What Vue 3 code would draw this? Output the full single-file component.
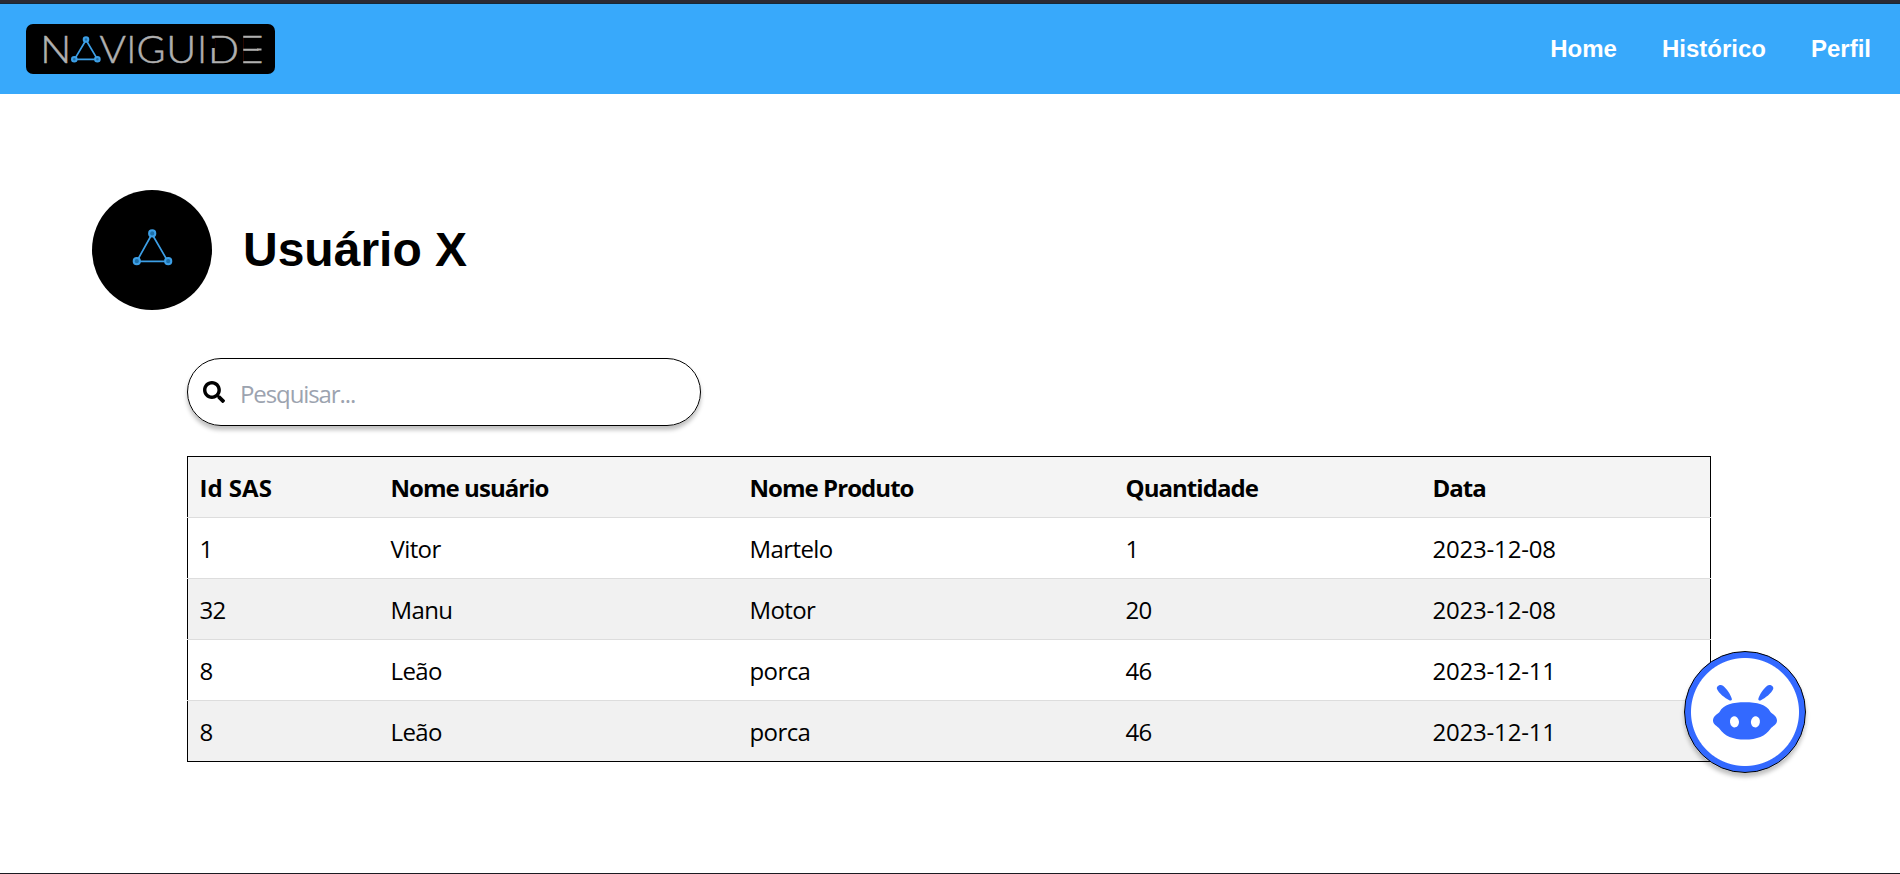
<script setup>
const links = ['Home', 'Histórico', 'Perfil']
const columns = [
  { label: 'Id SAS', cls: 'c-id' },
  { label: 'Nome usuário', cls: 'c-user' },
  { label: 'Nome Produto', cls: 'c-product' },
  { label: 'Quantidade', cls: 'c-qty' },
  { label: 'Data', cls: 'c-date' }
]
const rows = [
  ['1', 'Vitor', 'Martelo', '1', '2023-12-08'],
  ['32', 'Manu', 'Motor', '20', '2023-12-08'],
  ['8', 'Leão', 'porca', '46', '2023-12-11'],
  ['8', 'Leão', 'porca', '46', '2023-12-11']
]
</script>

<template>
  <div class="page">
    <header class="topbar">
      <svg class="logo" width="249" height="50" viewBox="0 0 249 50">
        <g class="logo-text">
          <text x="14.3" y="38.9" textLength="31" lengthAdjust="spacingAndGlyphs">N</text>
          <text x="73.600" y="38.9" textLength="26.500" lengthAdjust="spacingAndGlyphs">V</text>
          <text x="100.500" y="38.9">I</text>
          <text x="110.500" y="38.9" textLength="29" lengthAdjust="spacingAndGlyphs">G</text>
          <text x="140.200" y="38.9" textLength="30" lengthAdjust="spacingAndGlyphs">U</text>
          <text x="171.300" y="38.9">I</text>
          <text x="182" y="38.9" textLength="31" lengthAdjust="spacingAndGlyphs">D</text>
          <text x="208.700" y="38.9" textLength="29" lengthAdjust="spacingAndGlyphs">E</text>
        </g>
        <rect x="184" y="14.500" width="5" height="9.500" />
        <rect x="213" y="11" width="4.200" height="29" />
        <rect class="bar" x="231" y="24.500" width="4.500" height="2" />
        <g class="mark">
          <path d="M60 16 48.500 35.300H71.500Z" />
          <circle cx="60" cy="15.500" r="2.300" />
          <circle cx="48.300" cy="35.200" r="2.300" />
          <circle cx="71.400" cy="35.200" r="2.300" />
        </g>
      </svg>
      <nav class="nav">
        <a v-for="l in links" :key="l">{{ l }}</a>
      </nav>
    </header>

    <section class="profile">
      <svg class="avatar" width="120" height="120" viewBox="0 0 120 120">
        <circle cx="60" cy="60" r="60" />
        <g class="mark">
          <path d="M60 44 44.800 71.300H75.800Z" />
          <circle cx="60.200" cy="43.400" r="3.100" />
          <circle cx="44.800" cy="71.200" r="3.100" />
          <circle cx="76.200" cy="71.200" r="3.100" />
        </g>
      </svg>
      <h1>Usuário X</h1>
    </section>

    <main class="content">
      <div class="search">
        <svg width="22" height="22" viewBox="0 0 512 512">
          <path d="M505 442.700 405.300 343c-4.500-4.500-10.600-7-17-7H372c27.600-35.300 44-79.700 44-128C416 93.100 322.900 0 208 0S0 93.100 0 208s93.100 208 208 208c48.300 0 92.700-16.400 128-44v16.300c0 6.400 2.500 12.500 7 17l99.700 99.700c9.400 9.400 24.600 9.400 33.900 0l28.300-28.300c9.400-9.400 9.400-24.600.1-34zM208 336c-70.700 0-128-57.200-128-128 0-70.700 57.200-128 128-128 70.700 0 128 57.200 128 128 0 70.700-57.200 128-128 128z" />
        </svg>
        <input type="text" placeholder="Pesquisar..." />
      </div>

      <table>
        <colgroup>
          <col v-for="c in columns" :key="c.cls" :class="c.cls" />
        </colgroup>
        <thead>
          <tr>
            <th v-for="c in columns" :key="c.cls" :class="c.cls + '-head'">{{ c.label }}</th>
          </tr>
        </thead>
        <tbody>
          <tr v-for="(r, i) in rows" :key="i">
            <td v-for="(v, j) in r" :key="j" :class="columns[j].cls + '-cell'">{{ v }}</td>
          </tr>
        </tbody>
      </table>
    </main>

    <button class="bot" aria-label="Chat">
      <svg width="108" height="108" viewBox="0 0 108 108">
        <path d="M54 44.200C66 44.200 75.500 46 79.500 54C81 55.900 86 58 86 62.500C86 67 81.500 68 79.500 70.700C74.500 78 66 81.500 54 81.500C42 81.500 33.500 78 28.500 70.700C26.500 68 22 67 22 62.500C22 58 27 55.900 28.500 54C32.500 46 42 44.200 54 44.200Z" />
        <path d="M26 31C25 28 29.500 25.600 32 27.700C35.700 30.500 39.600 36.500 40.900 41C41.200 42.300 39.500 42.900 38.300 42.200C34 40 27.600 35.300 26 31Z" />
        <path d="M82.200 31C83.200 28 78.700 25.600 76.200 27.700C72.500 30.500 68.600 36.500 67.300 41C67 42.300 68.700 42.900 69.900 42.200C74.200 40 80.600 35.300 82.200 31Z" />
        <ellipse class="eye" cx="43.500" cy="63.800" rx="4.500" ry="5.600" transform="rotate(-8 43.500 63.800)" />
        <ellipse class="eye" cx="64.400" cy="63.800" rx="4.500" ry="5.600" transform="rotate(8 64.400 63.800)" />
      </svg>
    </button>
  </div>
</template>

<style>
body {
  margin: 0;
  background: #fff;
}
</style>

<style scoped>
.page {
  position: relative;
  box-sizing: border-box;
  height: 874px;
  overflow: hidden;
  border-top: 3px solid #2b2a33;
  border-bottom: 1px solid #1c1b22;
  background: #fff;
  color: #000;
  font-family: "Open Sans", "Noto Sans", sans-serif;
}
.topbar {
  box-sizing: border-box;
  height: 91px;
  border-top: 1px solid #15293a;
  background: #38a9fb;
  display: flex;
  justify-content: space-between;
  align-items: flex-start;
  padding: 20px 29px 0 26px;
}
.logo {
  display: block;
  background: #000;
  border-radius: 7px;
}
.logo-text {
  font-family: Lato, sans-serif;
  font-size: 37px;
  font-weight: 300;
  fill: #b0b0b0;
  stroke: #b0b0b0;
  stroke-width: 0.5;
}
.bar {
  fill: #b0b0b0;
}
.mark {
  fill: none;
  stroke: #3d9fe6;
  stroke-width: 1.7;
}
.mark circle {
  fill: #1d70aa;
  stroke-width: 2;
}
.nav {
  display: flex;
  gap: 45px;
  padding-top: 11px;
  font: bold 24px/28px "Liberation Sans", Arial, sans-serif;
  color: #fff;
}
.profile {
  display: flex;
  align-items: center;
  gap: 31px;
  margin: 96px 0 0 92px;
}
.avatar {
  display: block;
}
h1 {
  margin: 0;
  font: bold 48px/58px "Liberation Sans", Arial, sans-serif;
}
.content {
  margin: 48px 0 0 187px;
  width: 1524px;
}
.search {
  box-sizing: border-box;
  width: 514px;
  height: 68px;
  border: 1px solid #000;
  border-radius: 34px;
  box-shadow: 0 4px 4px rgba(0, 0, 0, 0.25);
  display: flex;
  align-items: center;
  padding-left: 15px;
  gap: 15px;
}
.search input {
  border: 0;
  outline: 0;
  padding: 3px 0 0;
  width: 400px;
  background: transparent;
  font: 24px/32px "Open Sans", "Noto Sans", sans-serif;
  letter-spacing: -1.1px;
}
.search input::placeholder {
  color: #9ca3af;
  opacity: 1;
}
table {
  width: 1524px;
  margin-top: 30px;
  table-layout: fixed;
  border-collapse: collapse;
  border: 1px solid #000;
  font-size: 24px;
  line-height: 36px;
}
.c-id { width: 191px; }
.c-user { width: 359px; }
.c-product { width: 376px; }
.c-qty { width: 307px; }
th,
td {
  height: 60px;
  padding: 2px 0 0 12px;
  box-sizing: border-box;
  text-align: left;
  letter-spacing: -0.6px;
}
th {
  letter-spacing: -0.95px;
}
th.c-id-head {
  letter-spacing: 0;
}
td.c-date-cell {
  letter-spacing: -0.2px;
}
.c-id-head,
.c-id-cell {
  padding-left: 11.5px;
}
tr {
  height: 61px;
}
thead tr {
  background: #f4f4f4;
}
tbody tr {
  border-top: 1px solid #ddd;
}
tbody tr:nth-child(even) {
  background: #f1f1f1;
}
.bot {
  position: absolute;
  left: 1684px;
  top: 648px;
  box-sizing: border-box;
  width: 122px;
  height: 122px;
  border: 1px solid #000;
  border-radius: 50%;
  padding: 0;
  background: radial-gradient(circle, #fff 53.500px, #3369ff 54.500px);
  box-shadow: 0 4px 4px rgba(0, 0, 0, 0.25);
  display: flex;
  align-items: center;
  justify-content: center;
  fill: #3369ff;
}
.eye {
  fill: #fff;
}
</style>
